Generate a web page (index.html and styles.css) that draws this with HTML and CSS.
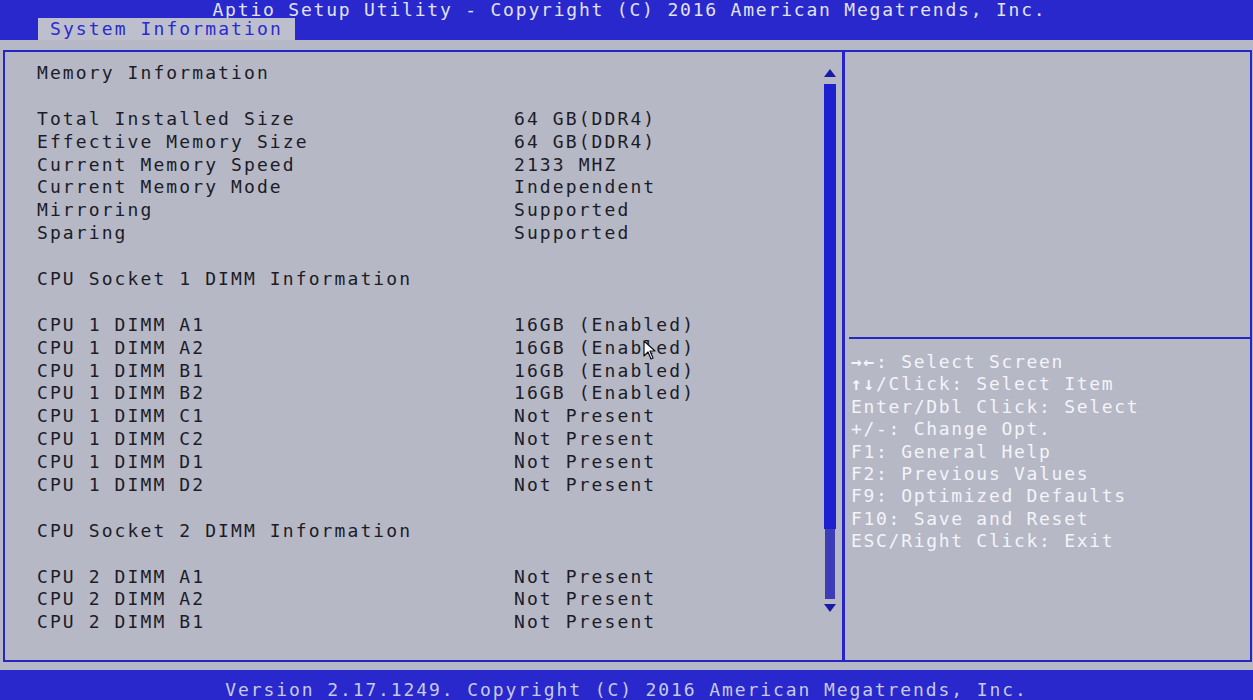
FILE: index.html
```html
<!DOCTYPE html>
<html lang="en">
<head>
    <meta charset="UTF-8">
    <title>Aptio Setup Utility</title>
    <link rel="stylesheet" href="styles.css">
</head>
<body>
    <div class="topbar">
        <div class="title">Aptio Setup Utility - Copyright (C) 2016 American Megatrends, Inc.</div>
        <div class="tabs"><span class="tab">System Information</span></div>
    </div>
    <div class="gap-top"></div>
    <div class="main">
        <div class="left">
            <div class="content">
                <div class="row"><span>Memory Information</span><span></span></div>
                <div class="row"><span>&nbsp;</span><span></span></div>
                <div class="row"><span>Total Installed Size</span><span>64 GB(DDR4)</span></div>
                <div class="row"><span>Effective Memory Size</span><span>64 GB(DDR4)</span></div>
                <div class="row"><span>Current Memory Speed</span><span>2133 MHZ</span></div>
                <div class="row"><span>Current Memory Mode</span><span>Independent</span></div>
                <div class="row"><span>Mirroring</span><span>Supported</span></div>
                <div class="row"><span>Sparing</span><span>Supported</span></div>
                <div class="row"><span>&nbsp;</span><span></span></div>
                <div class="row"><span>CPU Socket 1 DIMM Information</span><span></span></div>
                <div class="row"><span>&nbsp;</span><span></span></div>
                <div class="row"><span>CPU 1 DIMM A1</span><span>16GB (Enabled)</span></div>
                <div class="row"><span>CPU 1 DIMM A2</span><span>16GB (Enabled)</span></div>
                <div class="row"><span>CPU 1 DIMM B1</span><span>16GB (Enabled)</span></div>
                <div class="row"><span>CPU 1 DIMM B2</span><span>16GB (Enabled)</span></div>
                <div class="row"><span>CPU 1 DIMM C1</span><span>Not Present</span></div>
                <div class="row"><span>CPU 1 DIMM C2</span><span>Not Present</span></div>
                <div class="row"><span>CPU 1 DIMM D1</span><span>Not Present</span></div>
                <div class="row"><span>CPU 1 DIMM D2</span><span>Not Present</span></div>
                <div class="row"><span>&nbsp;</span><span></span></div>
                <div class="row"><span>CPU Socket 2 DIMM Information</span><span></span></div>
                <div class="row"><span>&nbsp;</span><span></span></div>
                <div class="row"><span>CPU 2 DIMM A1</span><span>Not Present</span></div>
                <div class="row"><span>CPU 2 DIMM A2</span><span>Not Present</span></div>
                <div class="row"><span>CPU 2 DIMM B1</span><span>Not Present</span></div>
                <svg class="cursor" width="14" height="20" viewBox="0 0 14 20">
                    <path d="M1 1 L1 16 L5 12 L8 19 L10 18 L7 11 L12 11 Z" fill="#fff" stroke="#111" stroke-width="1.2" stroke-linejoin="round"/>
                </svg>
            </div>
            <div class="scroll">
                <div class="arrow-up"></div>
                <div class="thumb"></div>
                <div class="track"></div>
                <div class="arrow-down"></div>
            </div>
        </div>
        <div class="right">
            <div class="help-top"></div>
            <div class="help">
                <div><b>&rarr;&larr;</b>: Select Screen</div>
                <div><b>&uarr;&darr;</b>/Click: Select Item</div>
                <div>Enter/Dbl Click: Select</div>
                <div>+/-: Change Opt.</div>
                <div>F1: General Help</div>
                <div>F2: Previous Values</div>
                <div>F9: Optimized Defaults</div>
                <div>F10: Save and Reset</div>
                <div>ESC/Right Click: Exit</div>
            </div>
        </div>
    </div>
    <div class="gap-bottom"></div>
    <div class="footer">Version 2.17.1249. Copyright (C) 2016 American Megatrends, Inc.</div>
</body>
</html>
```

FILE: styles.css
```css
body{
    margin:0;
    width:1253px;
    height:700px;
    overflow:hidden;
    background-color:#b6b8c6;
    font-family:"DejaVu Sans Mono", "Liberation Mono", monospace;
    font-size:18px;
    letter-spacing:2.1px;
    color:#1c1c26;
}
.topbar{
    background-color:#2828cc;
    height:40px;
    display:flex;
    flex-direction:column;
}
.title{
    text-align:center;
    color:#e2e2f2;
    height:18px;
    line-height:19px;
    letter-spacing:1.8px;
    padding-left:6px;
}
.tabs{
    padding-left:38px;
    display:flex;
    flex:1;
    align-items:flex-end;
}
.tab{
    background-color:#bdbfcc;
    color:#2a2ad0;
    padding:0 12px;
    height:22px;
    line-height:22px;
}
.gap-top{
    height:10px;
}
.main{
    display:flex;
    height:608px;
    margin:0 1px 0 3px;
    border-top:2px solid #2626c4;
    border-bottom:2px solid #2626c4;
    border-right:2px solid #2626c4;
}
.left{
    display:flex;
    width:837px;
    border-left:2px solid #2626c4;
    border-right:3px solid #2424c8;
}
.content{
    flex:1;
    position:relative;
    padding:10px 0 0 32px;
}
.row{
    display:grid;
    grid-template-columns:477px 1fr;
    height:22.9px;
    line-height:22.9px;
    white-space:nowrap;
}
.cursor{
    position:absolute;
    left:638px;
    top:288px;
}
.scroll{
    width:14px;
    margin-right:5px;
    display:flex;
    flex-direction:column;
    align-items:center;
    padding-top:17px;
}
.arrow-up{
    width:0;
    height:0;
    border-left:6px solid transparent;
    border-right:6px solid transparent;
    border-bottom:8px solid #1a1aa8;
}
.thumb{
    width:12px;
    height:445px;
    margin-top:7px;
    background-color:#1f1fd2;
}
.track{
    width:10px;
    height:70px;
    background-image:radial-gradient(circle, #3a3ab8 0.7px, transparent 1px);
    background-size:2px 2px;
    background-color:#a8aad0;
}
.arrow-down{
    margin-top:5px;
    width:0;
    height:0;
    border-left:6px solid transparent;
    border-right:6px solid transparent;
    border-top:8px solid #1a1aa8;
}
.right{
    flex:1;
    display:flex;
    flex-direction:column;
}
.help-top{
    height:285px;
    margin-left:4px;
    border-bottom:2px solid #2626c4;
}
.help{
    padding:12px 0 0 6px;
    color:#f4f4fa;
    line-height:22.4px;
    letter-spacing:1.7px;
    white-space:nowrap;
}
.gap-bottom{
    height:8px;
}
.footer{
    background-color:#2828cc;
    height:30px;
    line-height:40px;
    text-align:center;
    color:#c8cae8;
    letter-spacing:1.9px;
    overflow:hidden;
}
```
